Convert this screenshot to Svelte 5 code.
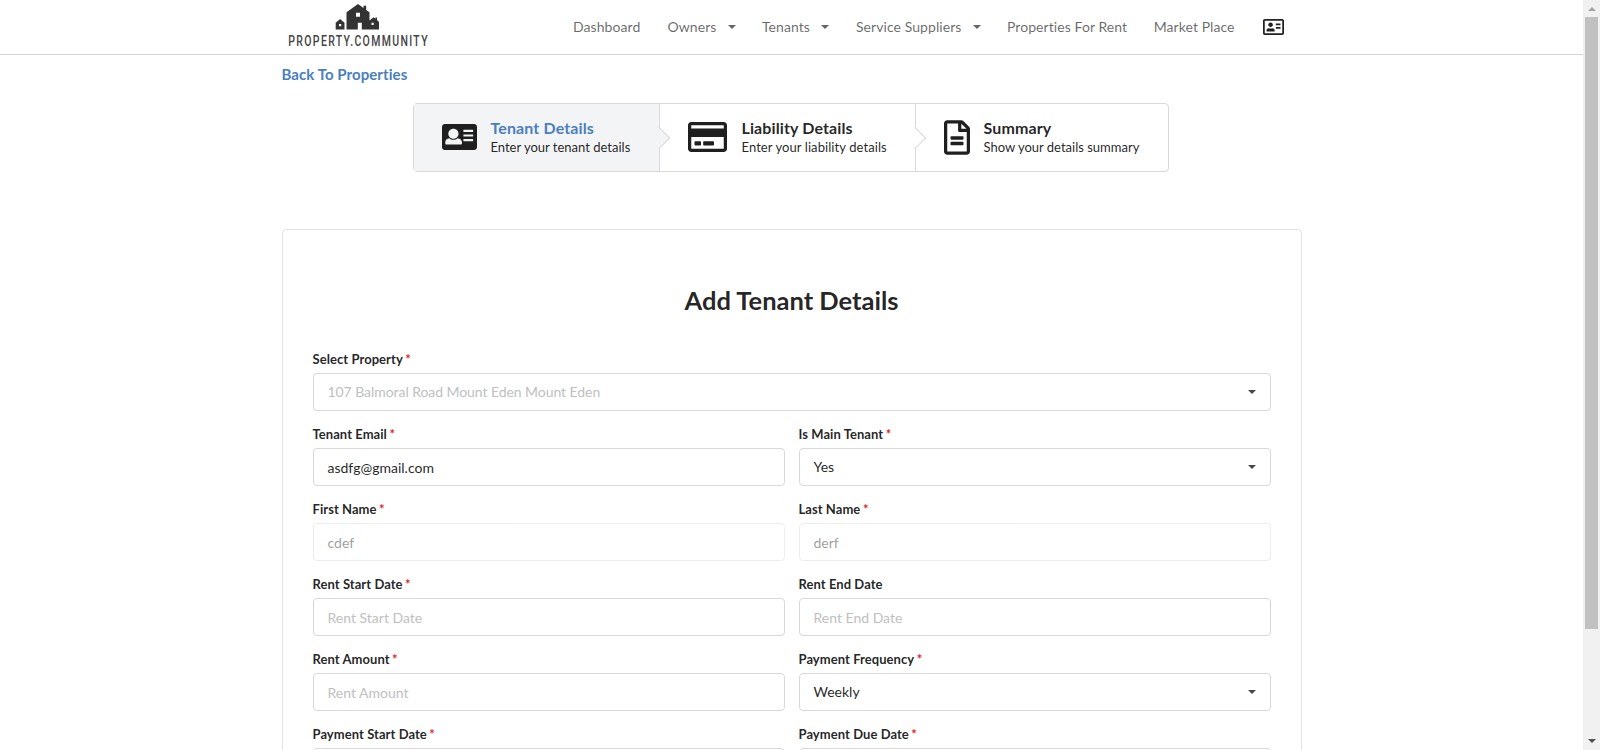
<script>
  const nav = [
    { label: 'Dashboard' },
    { label: 'Owners', menu: true },
    { label: 'Tenants', menu: true },
    { label: 'Service Suppliers', menu: true },
    { label: 'Properties For Rent' },
    { label: 'Market Place' }
  ];

  const fields = [
    { label: 'Select Property', required: true, value: '107 Balmoral Road Mount Eden Mount Eden', kind: 'select', hint: true, wide: true },
    { label: 'Tenant Email', required: true, value: 'asdfg@gmail.com', kind: 'input' },
    { label: 'Is Main Tenant', required: true, value: 'Yes', kind: 'select' },
    { label: 'First Name', required: true, value: 'cdef', kind: 'input', disabled: true },
    { label: 'Last Name', required: true, value: 'derf', kind: 'input', disabled: true },
    { label: 'Rent Start Date', required: true, value: 'Rent Start Date', kind: 'input', hint: true },
    { label: 'Rent End Date', value: 'Rent End Date', kind: 'input', hint: true },
    { label: 'Rent Amount', required: true, value: 'Rent Amount', kind: 'input', hint: true },
    { label: 'Payment Frequency', required: true, value: 'Weekly', kind: 'select' },
    { label: 'Payment Start Date', required: true, value: '', kind: 'input' },
    { label: 'Payment Due Date', required: true, value: '', kind: 'input' }
  ];
</script>

<div class="window">
  <div class="page">
    <header>
      <div class="bar">
        <svg class="logo" width="160" height="54" viewBox="0 0 160 54">
          <path
            fill="#333"
            fill-rule="evenodd"
            d="M64.500 12.300 76 4l5.500 4V5.800h2.700V10l3.300 2.300v17.200h-7.700V22.800h-4v6.700H64.500zM74 12.800h4v4h-4zM53.700 22.800l4.400-3.800 4.400 3.800v6.700h-8.800zM57 24h2.200v2.200H57zM87.500 20.500l4-3.300 2 1.600V17.500h1.500v2.400l2 2.100v7.500h-9.500zM89.500 22.800h2.200V25h-2.200z"
          />
          <text transform="translate(6.300 46) scale(0.7 1)" textLength="199" lengthAdjust="spacing">PROPERTY.COMMUNITY</text>
        </svg>
        <nav>
          {#each nav as item}
            <a href="#top">{item.label}{#if item.menu}<i class="caret"></i>{/if}</a>
          {/each}
          <svg class="card-icon" width="21" height="16" viewBox="0 32 576 448" preserveAspectRatio="none">
            <path d="M528 32H48C21.500 32 0 53.500 0 80v352c0 26.500 21.500 48 48 48h480c26.500 0 48-21.500 48-48V80c0-26.500-21.500-48-48-48zm0 400H48V80h480v352zM208 256c35.300 0 64-28.700 64-64s-28.700-64-64-64-64 28.700-64 64 28.700 64 64 64zm-89.600 128h179.200c12.400 0 22.400-8.600 22.400-19.200v-19.200c0-31.800-30.100-57.600-67.200-57.600-10.800 0-18.700 8-44.800 8-26.900 0-33.400-8-44.800-8-37.100 0-67.200 25.800-67.200 57.600v19.200c0 10.600 10 19.200 22.400 19.200zM352 256h128v48H352zM352 160h128v48H352z" />
          </svg>
        </nav>
      </div>
    </header>

    <main>
      <a class="back" href="#top">Back To Properties</a>

      <div class="steps">
        <div class="step active">
          <svg width="35" height="26" viewBox="0 32 576 448" preserveAspectRatio="none">
            <path fill-rule="evenodd" d="M528 32H48C21.500 32 0 53.500 0 80v352c0 26.500 21.500 48 48 48h480c26.500 0 48-21.500 48-48V80c0-26.500-21.500-48-48-48zM188 112c48 0 84 38 84 86s-36 86-84 86-84-38-84-86 36-86 84-86zm140 256c0 10-10 18-22 18H76c-12 0-22-8-22-18v-20c0-40 26-66 66-72 36 36 100 36 136 0 44 6 72 32 72 72zM352 132h160v36H352zM352 212h160v36H352zM352 292h160v36H352z" />
          </svg>
          <div>
            <div class="title">Tenant Details</div>
            <div class="desc">Enter your tenant details</div>
          </div>
        </div>
        <div class="step">
          <svg width="39" height="30" viewBox="0 32 576 448" preserveAspectRatio="none">
            <path d="M527.900 32H48.100C21.500 32 0 53.500 0 80v352c0 26.500 21.500 48 48.100 48h479.800c26.600 0 48.100-21.500 48.100-48V80c0-26.500-21.500-48-48.100-48zM54.100 80h467.800c3.300 0 6 2.700 6 6v42H48V86c0-3.300 2.700-6 6.100-6zm467.800 352H54.100c-3.300 0-6-2.700-6-6V256h480v170c0 3.300-2.700 6-6.100 6zM192 332v40c0 6.600-5.400 12-12 12h-72c-6.600 0-12-5.400-12-12v-40c0-6.600 5.400-12 12-12h72c6.600 0 12 5.400 12 12zm192 0v40c0 6.600-5.400 12-12 12H236c-6.600 0-12-5.400-12-12v-40c0-6.600 5.400-12 12-12h136c6.600 0 12 5.400 12 12z" />
          </svg>
          <div>
            <div class="title">Liability Details</div>
            <div class="desc">Enter your liability details</div>
          </div>
        </div>
        <div class="step">
          <svg width="26" height="35" viewBox="0 0 384 512">
            <path d="M288 248v28c0 6.600-5.400 12-12 12H108c-6.600 0-12-5.400-12-12v-28c0-6.600 5.400-12 12-12h168c6.600 0 12 5.400 12 12zm-12 72H108c-6.600 0-12 5.400-12 12v28c0 6.600 5.400 12 12 12h168c6.600 0 12-5.400 12-12v-28c0-6.600-5.400-12-12-12zm108-188.100V464c0 26.500-21.500 48-48 48H48c-26.500 0-48-21.500-48-48V48C0 21.500 21.500 0 48 0h204.100C264.800 0 277 5.100 286 14.100L369.900 98c9 8.900 14.100 21.200 14.100 33.900zm-128-80V128h76.100L256 51.900zM336 464V176H232c-13.300 0-24-10.700-24-24V48H48v416h288z" />
          </svg>
          <div>
            <div class="title">Summary</div>
            <div class="desc">Show your details summary</div>
          </div>
        </div>
      </div>

      <section class="card">
        <h1>Add Tenant Details</h1>
        <form>
          {#each fields as f}
            <div class="field" class:wide={f.wide} class:disabled={f.disabled}>
              <div class="label">{f.label}{#if f.required}<span class="star">*</span>{/if}</div>
              <div class="control {f.kind}" class:hint={f.hint}>
                <span>{f.value}</span>
                {#if f.kind === 'select'}<i class="caret"></i>{/if}
              </div>
            </div>
          {/each}
        </form>
      </section>
    </main>
  </div>

  <div class="scrollbar">
    <i class="up"></i>
    <div class="thumb"></div>
    <i class="down"></i>
  </div>
</div>

<style>
  :global(body) {
    margin: 0;
    background: #fff;
    overflow: hidden;
  }
  .window {
    display: flex;
    height: 750px;
    overflow: hidden;
    font: 14px/20px Lato, 'Liberation Sans', sans-serif;
    color: rgba(0, 0, 0, 0.87);
  }
  .page {
    flex: 1;
    height: 750px;
    overflow: hidden;
  }
  a {
    color: inherit;
    text-decoration: none;
  }
  header {
    height: 54px;
    border-bottom: 1px solid #d4d4d5;
  }
  .bar {
    display: flex;
    align-items: center;
    width: 1020px;
    height: 54px;
    margin: 0 auto;
  }
  .logo {
    flex: none;
    overflow: visible;
  }
  .logo text {
    font: 500 15px Roboto, sans-serif;
    fill: #444;
  }
  nav {
    display: flex;
    align-items: center;
    margin-left: 131.5px;
    gap: 26.5px;
    color: rgba(0, 0, 0, 0.6);
    letter-spacing: 0.07px;
    white-space: nowrap;
  }
  nav a:nth-child(2) {
    margin-left: 0.7px;
  }
  nav a:nth-child(3),
  nav a:nth-child(5) {
    margin-left: -0.5px;
  }
  .caret {
    display: inline-block;
    border: 4px solid transparent;
    border-top-color: currentColor;
    border-bottom: 0;
    vertical-align: 3px;
  }
  nav .caret {
    margin-left: 11.5px;
  }
  .control .caret {
    border-top-color: #484848;
  }
  .card-icon {
    margin-left: 2px;
    fill: rgba(0, 0, 0, 0.87);
  }
  main {
    width: 1020px;
    margin: 0 auto;
  }
  .back {
    display: block;
    padding: 9px 0 1px;
    font-size: 15px;
    font-weight: 700;
    letter-spacing: 0.07px;
    color: #4a7fbd;
  }
  .steps {
    display: flex;
    box-sizing: border-box;
    width: 756px;
    height: 69px;
    margin: 18px 0 0 131px;
    border: 1px solid #d9d9da;
    border-radius: 4px;
  }
  .step {
    position: relative;
    display: flex;
    align-items: center;
    box-sizing: border-box;
    width: 246px;
    padding: 0 0 1px 28px;
    gap: 14px;
  }
  .step:nth-child(2) {
    width: 256px;
    gap: 15px;
    letter-spacing: 0.08px;
  }
  .step:nth-child(3) {
    width: 252px;
  }
  .step:not(:last-child) {
    border-right: 1px solid #d9d9da;
  }
  .step:not(:last-child)::after {
    content: '';
    position: absolute;
    z-index: 1;
    top: 26px;
    right: -8px;
    width: 15px;
    height: 15px;
    background: #fff;
    border: solid #d9d9da;
    border-width: 1px 1px 0 0;
    transform: rotate(45deg);
  }
  .step.active,
  .step.active::after {
    background: #f3f4f5 !important;
  }
  .step svg {
    fill: #1f1f1f;
    flex: none;
  }
  .title {
    font-size: 16px;
    font-weight: 700;
    letter-spacing: 0.12px;
    line-height: 18px;
  }
  .active .title {
    color: #4a7fbd;
  }
  .desc {
    padding-top: 1px;
    font-size: 13px;
    line-height: 18px;
    white-space: nowrap;
  }
  .card {
    box-sizing: border-box;
    height: 900px;
    margin-top: 57px;
    padding: 52px 30px 0;
    border: 1px solid #e4e4e5;
    border-radius: 4px;
  }
  h1 {
    margin: 0 0 32px;
    font-size: 25.5px;
    line-height: 36px;
    text-align: center;
  }
  form {
    display: grid;
    grid-template-columns: 1fr 1fr;
    gap: 14px;
  }
  .wide {
    grid-column: 1 / -1;
  }
  .wide .control {
    letter-spacing: -0.06px;
  }
  .label {
    height: 22px;
    padding-top: 1px;
    font-size: 13px;
    font-weight: 700;
    letter-spacing: 0.06px;
    line-height: 17px;
  }
  .star {
    margin-left: 2.5px;
    color: #db2828;
  }
  .control {
    display: flex;
    align-items: center;
    justify-content: space-between;
    box-sizing: border-box;
    height: 38px;
    padding: 0 14px;
    border: 1px solid #d9d9da;
    border-radius: 4px;
  }
  .input {
    padding-top: 2px;
  }
  .hint span {
    color: #c0c0c0;
  }
  .disabled .control {
    opacity: 0.45;
  }
  .scrollbar {
    display: flex;
    flex-direction: column;
    align-items: center;
    width: 17px;
    background: #f1f1f1;
  }
  .up,
  .down {
    border: 4px solid transparent;
  }
  .up {
    margin-top: 7px;
    border-top: 0;
    border-bottom-color: #a3a3a3;
  }
  .thumb {
    width: 13px;
    height: 612px;
    margin-top: 6px;
    background: #c1c1c1;
  }
  .down {
    margin: auto 0 7px;
    border-bottom: 0;
    border-top-color: #505050;
  }
</style>
